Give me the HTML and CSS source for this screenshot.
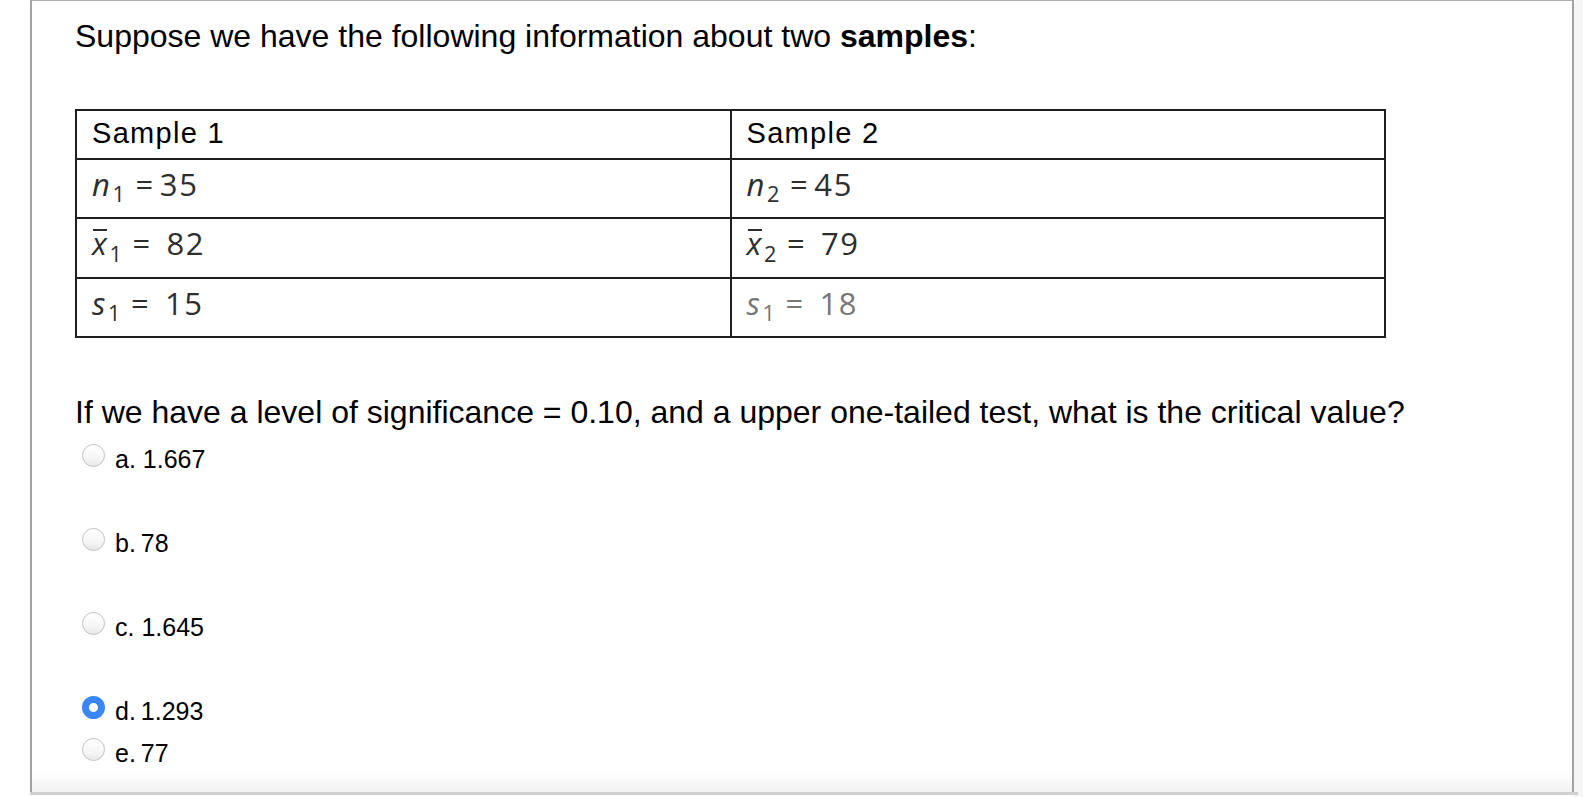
FILE: index.html
```html
<!DOCTYPE html>
<html lang="en">
<head>
<meta charset="utf-8">
<title>Two samples question</title>
<link rel="stylesheet" href="styles.css">
</head>
<body>
<div class="frame">
  <div class="content">
    <p class="lead">Suppose we have the following information about two <b>samples</b>:</p>
    <table class="samples">
      <tr class="head">
        <td>Sample 1</td>
        <td>Sample 2</td>
      </tr>
      <tr class="r2">
        <td class="math"><i>n</i><span class="sub">1</span><span class="eq">=</span>35</td>
        <td class="math"><i>n</i><span class="sub">2</span><span class="eq">=</span>45</td>
      </tr>
      <tr class="r3">
        <td class="math"><i class="xbar">x</i><span class="sub">1</span><span class="eq">=</span> 82</td>
        <td class="math"><i class="xbar">x</i><span class="sub">2</span><span class="eq">=</span> 79</td>
      </tr>
      <tr class="r4">
        <td class="math"><i>s</i><span class="sub">1</span><span class="eq">=</span> 15</td>
        <td class="math light"><i>s</i><span class="sub">1</span><span class="eq">=</span> 18</td>
      </tr>
    </table>
    <p class="question">If we have a level of significance = 0.10, and a upper one-tailed test, what is the critical value?</p>
    <div class="options">
      <label class="opt spaced"><span class="radio"></span><span class="opt-text">a. 1.667</span></label>
      <label class="opt spaced"><span class="radio"></span><span class="opt-text">b.&thinsp;78</span></label>
      <label class="opt spaced"><span class="radio"></span><span class="opt-text">c. 1.645</span></label>
      <label class="opt"><span class="radio checked"></span><span class="opt-text">d.&thinsp;1.293</span></label>
      <label class="opt"><span class="radio"></span><span class="opt-text">e.&thinsp;77</span></label>
    </div>
  </div>
</div>
<div class="baseline"></div>
</body>
</html>
```

FILE: styles.css
```css
html, body {
  margin: 0;
  padding: 0;
}

body {
  background: linear-gradient(to right, #ffffff 1574px, #f6f6f6 1574px);
  font-family: "Liberation Sans", Arial, Helvetica, sans-serif;
  color: #000;
  overflow: hidden;
}

.frame {
  margin-left: 30px;
  width: 1540px;
  height: 791px;
  border-top: 1px solid #acacac;
  border-left: 2px solid #a2a2a2;
  border-right: 2px solid #a2a2a2;
  background: linear-gradient(to bottom, #ffffff calc(100% - 20px), #f1f1f1 100%);
}

.baseline {
  margin-left: 30px;
  width: 1548px;
  height: 3px;
  background: #d0d0d0;
}

.content {
  padding: 17px 0 0 43px;
}

.lead {
  margin: 0;
  font-size: 32px;
  line-height: 37px;
}

.samples {
  margin-top: 54px;
  width: 1311px;
  table-layout: fixed;
  border-collapse: separate;
  border-spacing: 2px;
  background: #1e1e1e;
}

.samples td {
  background: #fff;
  padding: 0 0 0 15px;
  vertical-align: middle;
  box-sizing: border-box;
}

.head td {
  height: 47px;
  font-size: 29px;
  line-height: 34px;
  letter-spacing: 1.3px;
  padding-bottom: 3px;
}

.r2 td { height: 57px; }
.r3 td { height: 58px; }
.r4 td { height: 57px; }

.samples td.math {
  font-family: "Open Sans", "Liberation Sans", sans-serif;
  font-size: 31px;
  line-height: 32px;
  color: #2e2e2e;
  letter-spacing: 1.6px;
  padding-bottom: 10px;
}

.math i {
  font-style: italic;
}

.samples td.math.light {
  color: #777;
}

.sub {
  font-size: 0.7em;
  vertical-align: -0.3em;
  line-height: 0;
  margin-left: 1px;
}

.eq {
  margin: 0 5px 0 9px;
}

.xbar {
  position: relative;
  display: inline-block;
  line-height: 32px;
}

.xbar::before {
  content: "";
  position: absolute;
  left: 1px;
  right: 1px;
  top: 2px;
  border-top: 2px solid currentColor;
}

.question {
  margin: 56px 0 0 0;
  font-size: 32px;
  line-height: 37px;
}

.options {
  margin-top: 7px;
  display: flex;
  flex-direction: column;
}

.opt {
  display: flex;
  align-items: center;
  height: 42px;
  font-size: 25px;
}

.opt.spaced {
  margin-bottom: 42px;
}

.radio {
  box-sizing: border-box;
  width: 23px;
  height: 23px;
  margin: 0 10px 8px 7px;
  border-radius: 50%;
  border: 1px solid #c2c2c2;
  background: linear-gradient(to bottom, #ffffff 0%, #f6f6f6 60%, #e8e8e8 100%);
  box-shadow: inset 0 1px 1px rgba(255, 255, 255, 0.9);
}

.radio.checked {
  border: 7px solid #3a86f7;
  background: #fff;
  box-shadow: none;
}
```
